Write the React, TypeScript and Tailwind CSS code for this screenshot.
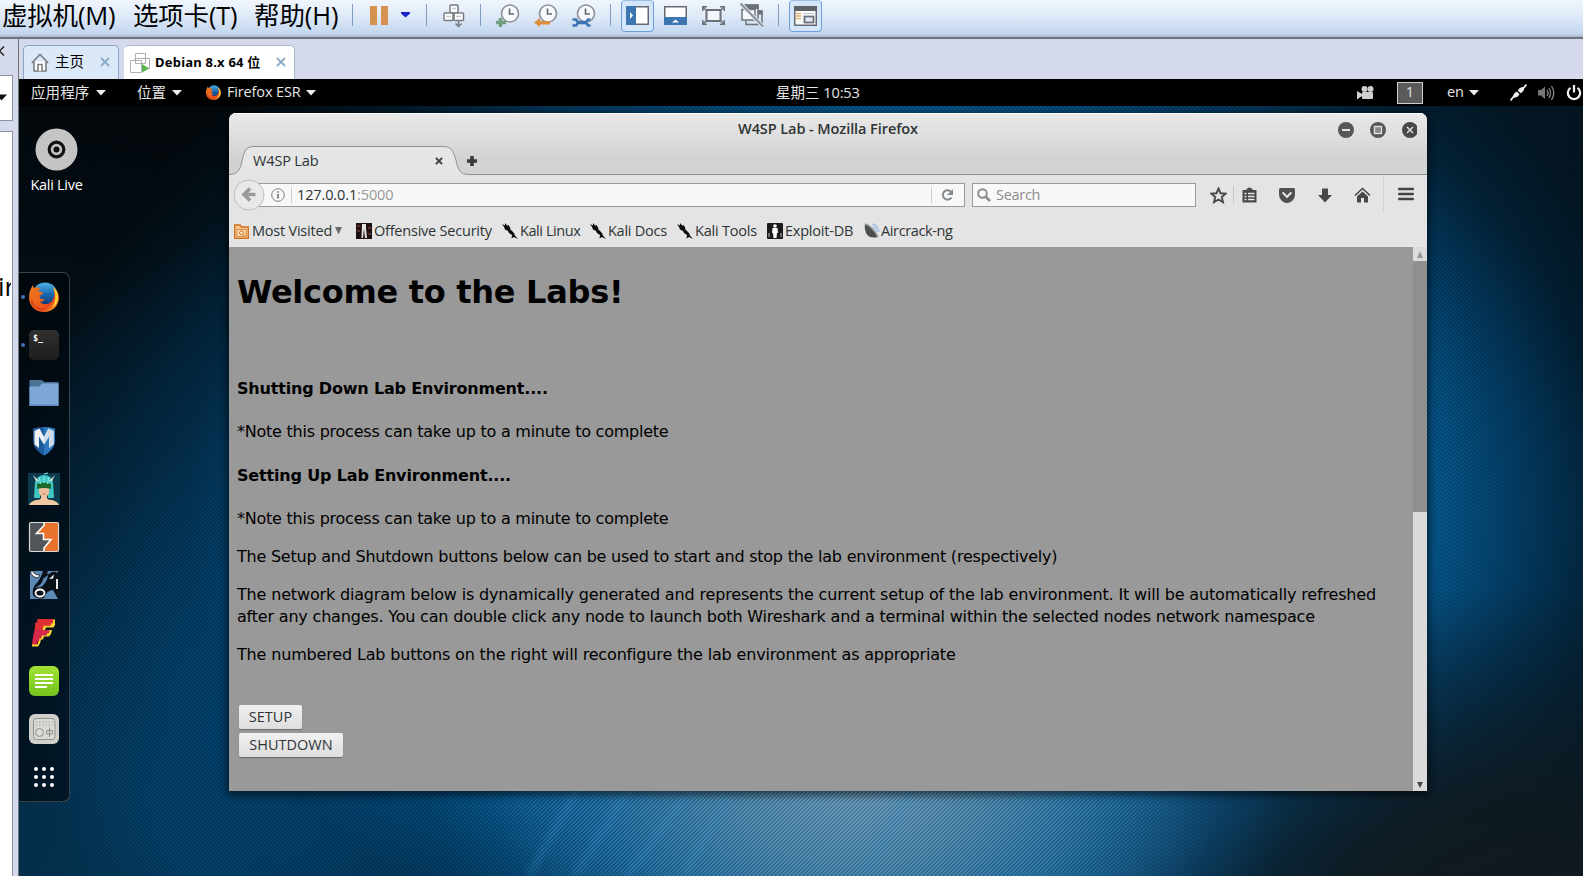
import React from "react";

const ui = "font-['Open_Sans','Noto_Sans_CJK_SC',sans-serif]";

function Sep({ className = "" }: { className?: string }) {
  return <div className={"w-px h-[22px] mt-1 bg-[#7f9cc0] shrink-0 " + className} />;
}

function Caret({ className = "" }: { className?: string }) {
  return (
    <svg className={"w-[10px] h-[6px] shrink-0 " + className} viewBox="0 0 10 6">
      <path d="M0 0H10L5 5.5Z" fill="#eeeeee" />
    </svg>
  );
}

function FirefoxLogo({ className = "", id }: { className?: string; id: string }) {
  return (
    <svg className={"shrink-0 " + className} viewBox="0 0 30 30">
      <defs>
        <linearGradient id={id + "f"} x1="0" y1="0" x2="0.9" y2="1">
          <stop offset="0" stopColor="#e8791c" />
          <stop offset="0.5" stopColor="#f0641a" />
          <stop offset="0.75" stopColor="#ea4a17" />
          <stop offset="1" stopColor="#fbc52c" />
        </linearGradient>
        <linearGradient id={id + "g"} x1="0" y1="0" x2="0" y2="1">
          <stop offset="0" stopColor="#4fb3e8" />
          <stop offset="0.5" stopColor="#1565ad" />
          <stop offset="1" stopColor="#0a2c66" />
        </linearGradient>
      </defs>
      <circle cx="16" cy="13" r="12.6" fill={"url(#" + id + "g)"} />
      <path d="M24 5C28 8 30 11.500 30 16C29.500 24.500 23 30 15 30C6.500 30 0 24 0 15.500C0 11 1 8 2.500 5.500L3.500 3L5 6C7 5 9.500 5 11.500 6.500C10 7 9.500 8.500 9.800 9.500L14 10.500C14 12 12.500 12.800 11 13.500C10.500 14.500 11 16 12 17L16 17.500C14.500 19.500 12 20 10.500 19.500C13 22.500 18 23 21.500 20.500C25.500 17.500 26.500 11 24 5Z" fill={"url(#" + id + "f)"} />
      <path d="M24 5C28 8 29.500 12 29.200 17C28.500 21 26.500 24 23 25.500C27 20 27.500 11 24 5Z" fill="#fdd235" />
      <path d="M3 17C5 25 12 28 20 26C12 30 3 27 1.500 19Z" fill="#c8361a" fillOpacity="0.600" />
    </svg>
  );
}

function Clock({ className = "", children }: { className?: string; children: React.ReactNode }) {
  return (
    <svg className={"w-6 h-6 mt-1 shrink-0 " + className} viewBox="0 0 24 24" fill="none">
      <circle cx="14" cy="9.500" r="8.500" fill="#f6f9fd" stroke="#8b9096" strokeWidth="1.600" />
      <path d="M13.500 4.500V10H18" stroke="#63686d" strokeWidth="1.600" />
      {children}
    </svg>
  );
}

function VmToolbar() {
  return (
    <div className={"flex h-[39px] shrink-0 border-b-2 border-[#6e747c] bg-[linear-gradient(#f1f6fd_0%,#dde9f8_45%,#c2d6ee_92%,#a9b4c2_100%)] " + ui}>
      <div className="flex w-[352px] shrink-0 pl-[2px] text-[25.500px] leading-[31px] text-black whitespace-nowrap">
        <span className="w-[131px] tracking-[-0.200px]">虚拟机(M)</span>
        <span className="w-[121px] tracking-[-0.200px]">选项卡(T)</span>
        <span className="tracking-[-0.100px]">帮助(H)</span>
      </div>
      <Sep />
      <div className="flex gap-[4px] ml-[17px] mt-[6px]">
        <div className="w-[7px] h-[19px] bg-[#d4914f]" />
        <div className="w-[7px] h-[19px] bg-[#d4914f]" />
      </div>
      <svg className="w-[9px] h-[6px] mt-[12px] ml-[13px]" viewBox="0 0 9 6"><path d="M0 0H9V1.500L4.500 5.500L0 1.500Z" fill="#1a23c4" /></svg>
      <Sep className="ml-[16px]" />
      <svg className="w-[22px] h-[24px] mt-[4px] ml-[16px]" viewBox="0 0 22 24" fill="#fff" stroke="#777b80" strokeWidth="1.500">
        <rect x="7" y="1" width="8" height="8" rx="1" />
        <rect x="1" y="9" width="9" height="7.500" rx="1" />
        <rect x="11" y="9" width="9.500" height="7.500" rx="1" />
        <path d="M15.500 16V22M12.500 19.500L15.500 22.500L18.500 19.500" fill="none" />
        <path d="M3 12.500H8M13 12.500H18M9 4.500H13" stroke="#c3c8ce" />
      </svg>
      <Sep className="ml-[15px]" />
      <Clock className="ml-[15px]">
        <path d="M4.500 14V23M0 18.500H10" stroke="#6f9d80" strokeWidth="3.400" />
      </Clock>
      <Clock className="ml-[14px]">
        <path d="M0 18.500L6 14V17H16V20.500H6V23Z" fill="#dc8f3c" />
      </Clock>
      <Clock className="ml-[14px]">
        <path d="M5 18.500H14" stroke="#3b74b4" strokeWidth="3.500" />
        <path d="M0.500 15.500H4L6 18.500L4 21.500H0.500M18.500 15.500H16L14 18.500L16 21.500H18.500" stroke="#3b74b4" strokeWidth="2.600" />
      </Clock>
      <Sep className="ml-[14px]" />
      <div className="ml-[10px] w-[33px] h-[32px] shrink-0 rounded-[4px] border border-[#6e9fdc] border-t-[#9fbfe8] bg-[#d5e6fa] flex justify-center">
        <svg className="w-[23px] h-[19px] mt-[5px]" viewBox="0 0 23 19">
          <rect x="0.750" y="0.750" width="21.500" height="17.500" fill="#fff" stroke="#676b70" strokeWidth="1.500" />
          <rect x="0" y="0" width="10" height="19" fill="#3c76b0" />
          <path d="M4 6L7 9.500L4 13Z" fill="#fff" />
        </svg>
      </div>
      <svg className="w-[23px] h-[19px] mt-[6px] ml-[10px]" viewBox="0 0 23 19">
        <rect x="0.750" y="0.750" width="21.500" height="17" fill="#fff" stroke="#676b70" strokeWidth="1.500" />
        <rect x="0" y="11" width="23" height="8" fill="#3c76b0" />
        <path d="M8 16.500L11.500 13.500L15 16.500Z" fill="#fff" />
      </svg>
      <svg className="w-[23px] h-[19px] mt-[6px] ml-[15px]" viewBox="0 0 23 19" fill="none" stroke="#6c7177" strokeWidth="1.500">
        <rect x="4.500" y="4" width="14" height="11" strokeWidth="2" fill="#f3f7fc" />
        <path d="M0.800 5V0.800H5M18 0.800H22.200V5M22.200 14V18.200H18M5 18.200H0.800V14M1 1L4 4M22 1L19 4M1 18L4 15M22 18L19 15" />
      </svg>
      <svg className="w-[24px] h-[24px] mt-[3px] ml-[15px]" viewBox="0 0 24 24" fill="none">
        <rect x="5" y="2" width="13" height="13" fill="#e9f0f9" stroke="#6c7177" strokeWidth="1.500" />
        <rect x="4.300" y="1.500" width="14.500" height="4.500" fill="#6c7177" />
        <path d="M18 8H22V20H17" stroke="#6c7177" strokeWidth="1.500" />
        <rect x="18" y="7.500" width="4.500" height="4" fill="#6c7177" />
        <rect x="2" y="6.500" width="13" height="10.500" fill="#f7fafd" stroke="#6c7177" strokeWidth="1.500" />
        <path d="M6 18V21.500H18V16" stroke="#6c7177" strokeWidth="1.500" />
        <path d="M0.500 0.500L23 23.500" stroke="#dfe9f6" strokeWidth="4" />
        <path d="M0.500 0.500L23 23.500" stroke="#8c9096" strokeWidth="2" />
      </svg>
      <Sep className="ml-[14px]" />
      <div className="ml-[10px] w-[33px] h-[32px] shrink-0 rounded-[4px] border border-[#6e9fdc] border-t-[#9fbfe8] bg-[#d5e6fa] flex justify-center">
        <svg className="w-[23px] h-[20px] mt-[5px]" viewBox="0 0 23 20">
          <rect x="0.750" y="0.750" width="21.500" height="18.500" fill="#fafbfc" stroke="#676b70" strokeWidth="1.500" />
          <rect x="0" y="0" width="23" height="5" fill="#5f6266" />
          <path d="M2 7.500H7M2 10H7M2 12.500H7" stroke="#e5b476" strokeWidth="1.300" />
          <path d="M9 7.500H20" stroke="#c5c9cf" />
          <rect x="10.500" y="10.500" width="9" height="6" fill="#dfeaf6" stroke="#6c7177" strokeWidth="1.800" />
        </svg>
      </div>
    </div>
  );
}

function TabClose({ className = "" }: { className?: string }) {
  return (
    <svg className={"w-[10px] h-[10px] shrink-0 " + className} viewBox="0 0 10 10" stroke="#88aac6" strokeWidth="1.800">
      <path d="M1 1L9 9M9 1L1 9" />
    </svg>
  );
}

function VmTabs() {
  return (
    <div className={"flex h-10 shrink-0 items-end bg-[#d4d9ec] pl-[4px] " + ui}>
      <div className="flex h-[34px] w-[96px] items-center rounded-t-[5px] border border-b-0 border-[#8da5c4] bg-[#dbe8f7] pl-[7px]">
        <svg className="w-[18px] h-[19px] mt-[-1px]" viewBox="0 0 18 19" fill="#fff" stroke="#7b7f84" strokeWidth="1.600">
          <path d="M3 8.500V18H15V8.500" />
          <path d="M7 18V11.500H11V18" />
          <path d="M0.800 10L9 1.500L17.200 10" fill="none" />
        </svg>
        <span className="ml-[6px] mt-[-2px] w-[45px] text-[14.500px] leading-5 text-black">主页</span>
        <TabClose className="mt-[-2px]" />
      </div>
      <div className="ml-[5px] flex h-[34px] w-[171px] items-center rounded-t-[5px] border border-b-0 border-[#a9b6cc] border-l-white bg-white pl-[5px]">
        <svg className="w-[20px] h-[20px]" viewBox="0 0 20 20" fill="none" stroke="#9a9ea4" strokeWidth="1">
          <path d="M5.500 0.500H15.500V10.500H5.500ZM0.500 7.500H11.500V19.500H0.500ZM4.500 5.500H19.500V16" strokeOpacity="0.800" />
          <path d="M12 11L19.500 15.500L12 19.500Z" fill="#5cb54e" stroke="none" />
        </svg>
        <span className="ml-[5px] mt-[-2px] w-[121px] whitespace-nowrap text-[13px] font-bold leading-5 tracking-[0.220px] text-black font-['Noto_Sans','Noto_Sans_CJK_SC',sans-serif]">Debian 8.x 64 位</span>
        <TabClose className="mt-[-2px]" />
      </div>
    </div>
  );
}

function GnomeBar() {
  return (
    <div className={"flex h-[27px] shrink-0 items-center bg-black text-[14.500px] leading-none text-[#e6e6e6] whitespace-nowrap " + ui}>
      <span className="ml-[12px] w-[65px] pt-[1px] tracking-[0.100px]">应用程序</span>
      <Caret />
      <span className="ml-[31px] w-[35px] pt-[1px]">位置</span>
      <Caret />
      <FirefoxLogo id="bar" className="ml-[24px] w-[15px] h-[15px]" />
      <span className="ml-[6px] w-[79px] tracking-[-0.150px]">Firefox ESR</span>
      <Caret />
      <span className="ml-[460px] w-[581px] pt-[1px]"><span>星期三</span> <span className="tracking-[-0.100px]">10:53</span></span>
      <svg className="w-[17px] h-[14px] shrink-0" viewBox="0 0 17 14" fill="#d0d0d0">
        <circle cx="7.500" cy="3" r="3" /><circle cx="13.500" cy="3" r="3" />
        <rect x="5" y="6" width="11" height="7" rx="1" />
        <path d="M0 5L5 8V10L0 13.500Z" />
      </svg>
      <div className="ml-[23px] w-[26px] h-[22px] shrink-0 border border-[#cfcfcf] bg-[#5a5a5a] flex items-center justify-center">1</div>
      <span className="ml-[24px] w-[22px] tracking-[-0.200px]">en</span>
      <Caret />
      <svg className="ml-[31px] w-[17px] h-[17px] shrink-0" viewBox="0 0 17 17">
        <path d="M0.500 16.500L4 12M13 4.500L16.500 0.500" stroke="#eee" strokeWidth="1.800" />
        <path d="M3 13.500C2.600 11 4.500 8.800 7 7.600L9.500 10.300C8.500 12.500 6 14.300 3 13.500ZM7.800 6.500C9 4 11.500 2.600 14.200 3.200C14.400 6 13 8.200 10.500 9.300Z" fill="#eee" />
      </svg>
      <svg className="ml-[11px] w-[18px] h-[16px] shrink-0" viewBox="0 0 18 16" fill="none" stroke="#8c8c8c" strokeWidth="1.300">
        <path d="M0 5H3L7 1.500V14L3 10.500H0Z" fill="#777" stroke="none" />
        <path d="M9 5Q11 8 9 11M11 3Q14 8 11 13M13.500 1Q18 8 13.500 15" />
      </svg>
      <svg className="ml-[10px] w-[16px] h-[16px] shrink-0" viewBox="0 0 16 16" fill="none" stroke="#f0f0f0" strokeWidth="2.200">
        <path d="M4.500 2.800A6.200 6.200 0 1 0 11.500 2.800M8 0V7.500" />
      </svg>
    </div>
  );
}

function DockItem({ children, running }: { children: React.ReactNode; running?: boolean }) {
  return (
    <div className="flex h-12 items-center">
      <div className={"ml-[2px] mr-[4px] size-[4px] rounded-full " + (running ? "bg-[#3f73b4]" : "bg-transparent")} />
      <svg className="size-[30px] overflow-visible" viewBox="0 0 30 30">{children}</svg>
    </div>
  );
}

function Dock() {
  return (
    <div className="absolute left-0 top-[166px] h-[530px] w-[51px] rounded-r-[7px] border border-l-0 border-[#36424a] bg-[#00050a]/60">
      <div className="flex h-12 items-center">
        <div className="ml-[2px] mr-[4px] size-[4px] rounded-full bg-[#3f73b4]" />
        <FirefoxLogo id="dock" className="size-[30px]" />
      </div>
      <DockItem running>
        <defs><linearGradient id="term" x1="0" y1="0" x2="0" y2="1"><stop offset="0" stopColor="#303030" /><stop offset="1" stopColor="#1d1d1d" /></linearGradient></defs>
        <rect width="30" height="30" rx="5" fill="url(#term)" />
        <text x="4" y="11" fontSize="8.500" fontWeight="bold" fill="#fff" fontFamily="DejaVu Sans Mono">$_</text>
      </DockItem>
      <DockItem>
        <path d="M0.500 2H13L15 4H29.500V27H0.500Z" fill="#4b7396" />
        <path d="M0.500 8.500H10L13 5.500H29.500V28H0.500Z" fill="#7ea7d8" />
        <rect x="0.500" y="26.500" width="29" height="1.500" fill="#5e8cc4" />
      </DockItem>
      <DockItem>
        <path d="M4 2.500Q15 -0.500 26 2.500V15.500Q25 24 15 29.500Q5 24 4 15.500Z" fill="#1f5c9e" />
        <path d="M15 1Q21 1 26 2.500V15.500Q25 24 15 29.500Z" fill="#2e79bd" />
        <path d="M5.500 5L10.500 2.500L15 11L19.500 2.500L24.500 5V18.500L20 22V10.500L15 18.500L10 10.500V22L5.500 18.500Z" fill="#eef2f7" />
        <path d="M15 11L19.500 2.500L24.500 5V18.500L20 22V10.500L15 18.500Z" fill="#cfdbe8" />
      </DockItem>
      <DockItem>
        <rect x="-1" y="-1" width="32" height="32" fill="#0c3a4d" />
        <path d="M5 24L6 8Q9 1 15 1Q22 1 24 8L25 24H19V11H11V24Z" fill="#3fc6c5" />
        <path d="M4 1L7 7L10 7ZM26 1L23 7L20 7Z" fill="#e8e4cf" />
        <path d="M10 11H20V19L17 24H13L10 19Z" fill="#eebf9c" />
        <path d="M8 10Q15 7 22 10V15Q15 13 8 15Z" fill="#1c6b2c" />
        <path d="M0 31Q2 26 11 25.500L13 22H17L19 25.500Q28 26 30 31Z" fill="#f0c8a4" />
        <path d="M13.500 20H16.500" stroke="#b0705a" />
        <path d="M10 3L11.500 10M15 0L19 -1M15 3V9M20 3L18.500 10" stroke="#8be9e4" />
      </DockItem>
      <DockItem>
        <rect x="0.500" y="0.500" width="29" height="29" rx="1" fill="#50565a" />
        <path d="M15 0.500H29.500V29.500H15L15 26L22 17.500H14V12H7L15 3Z" fill="#e9722c" />
        <path d="M15 1V3.500L7.500 11.500H14.500V17.500H22L15 26V29" fill="none" stroke="#fff" strokeWidth="1.600" />
        <rect x="0.500" y="0.500" width="29" height="29" rx="1.500" fill="none" stroke="#d9d9d6" strokeWidth="1.200" />
      </DockItem>
      <DockItem>
        <rect x="1" y="1" width="28" height="28" fill="#5d8ab5" />
        <path d="M14 1Q12 9 6 15Q3 19 4 25Q8 30 15 28Q18 20 24 20L29 29V3Q24 0 20 4Q17 5 19 1Z" fill="#0a1119" />
        <path d="M1.500 1Q2 7 9 8L11 5Q5 5 4 1Z" fill="#fff" stroke="#111" strokeWidth="0.800" />
        <path d="M14 9Q13 15 6 18L12 17Q18 13 19 5Z" fill="#5d8ab5" />
        <ellipse cx="11" cy="23" rx="4.500" ry="3.500" fill="#0a1119" stroke="#fff" strokeWidth="1.800" />
        <path d="M20 9L25 4.500L24 8.500Z" fill="#fff" />
        <path d="M28 9V19" stroke="#fff" strokeWidth="1.800" />
      </DockItem>
      <DockItem>
        <path d="M10 1.500H26V7L24.500 9.500H17L16 12H23L22 16L20 18.500H15L14 21.500H12L11 25.500L9 28.500H3V26H9Z" fill="#f6d32e" />
        <path d="M8.500 1H24V5L22 5.500L21.500 7.500H14.500L13.500 12H20.500L20 15L18 15.500L17.500 17.500H13L12 20.500H10.500L10 23.500H8.500L8 26.500H3L4 19L5.500 12L6.500 4.500H8.500Z" fill="#d5294a" />
        <path d="M8.500 1H24V5L22 5.500L21.500 7.500H14.500L13.500 12H6L6.500 4.500H8.500Z" fill="#e02f34" />
      </DockItem>
      <DockItem>
        <defs><linearGradient id="leaf" x1="0" y1="0" x2="0" y2="1"><stop offset="0" stopColor="#a2e234" /><stop offset="1" stopColor="#74c31d" /></linearGradient></defs>
        <rect width="30" height="30" rx="6" fill="url(#leaf)" />
        <path d="M6 9H24M6 13H24M6 17H24M6 21H18" stroke="#fff" strokeWidth="2" />
      </DockItem>
      <DockItem>
        <rect width="30" height="30" rx="6" fill="#cfd0cc" />
        <rect x="4.500" y="4.500" width="21.500" height="21" rx="3" fill="#d9dad6" stroke="#8e8f8b" />
        <path d="M7 8H24M7 11H24" stroke="#9a9b97" strokeDasharray="1.200 2" />
        <circle cx="10.500" cy="18.500" r="4" fill="none" stroke="#8e8f8b" />
        <path d="M20.500 13.500V23M17.500 16.500H23.500V20H17.500Z" fill="none" stroke="#8e8f8b" />
      </DockItem>
      <DockItem>
        <g fill="#fff">
          <circle cx="7" cy="7" r="2" /><circle cx="15" cy="7" r="2" /><circle cx="23" cy="7" r="2" />
          <circle cx="7" cy="15" r="2" /><circle cx="15" cy="15" r="2" /><circle cx="23" cy="15" r="2" />
          <circle cx="7" cy="23" r="2" /><circle cx="15" cy="23" r="2" /><circle cx="23" cy="23" r="2" />
        </g>
      </DockItem>
    </div>
  );
}

function KaliIcon({ className = "" }: { className?: string }) {
  return (
    <svg className={"size-4 shrink-0 " + className} viewBox="0 0 16 16" fill="#0d0d0d">
      <path d="M0 1L3 2.500L3 0L5.500 3L6 1.500L8.500 5L8 6L10 8L12 10L13 12.500L16 16L12 14L9.500 15.500L10 12L7 10L6 8L3 6.500L2 4Z" />
    </svg>
  );
}

function Firefox() {
  return (
    <div className={"absolute left-[210px] top-[7px] flex h-[678px] w-[1198px] flex-col overflow-hidden rounded-t-[7px] bg-[#e4e4e4] text-[#2e3436] shadow-[0_2px_8px_2px_rgba(0,0,0,0.6)] " + ui}>
      <div className="h-[62px] shrink-0 bg-[linear-gradient(#e9e9e9_0%,#d2d2d2_75%,#d3d3d3_100%)]">
        <div className="flex h-[33px] items-center border-t border-white">
          <span className="ml-[509px] mt-[-2px] w-[579px] whitespace-nowrap text-[14.500px] font-semibold leading-none tracking-[-0.080px]">W4SP Lab - Mozilla Firefox</span>
          <svg className="w-[80px] h-4 mt-[-1px] ml-[20px]" viewBox="0 0 80 16" fill="none" stroke="#e4e4e4">
            <circle cx="9" cy="8" r="8" fill="#575757" stroke="none" />
            <path d="M5 8H13" strokeWidth="2" />
            <circle cx="41" cy="8" r="8" fill="#575757" stroke="none" />
            <rect x="37.500" y="4.500" width="7" height="7" strokeWidth="1.300" fill="#8a8a8a" />
            <circle cx="73" cy="8" r="8" fill="#484848" stroke="none" />
            <path d="M70 5L76 11M76 5L70 11" strokeWidth="1.400" />
          </svg>
        </div>
        <div className="grid h-[29px] grid-cols-[248px_1fr]">
          <div className="col-start-1 row-start-1">
            <svg className="block w-[248px] h-[29px]" viewBox="0 0 248 29">
              <path d="M0 28.500C9 28.500 11 24 13 15C15 5 17 0.500 25 0.500H214C222 0.500 224 4 227 14C229 24 231 28.500 240 28.500H248V29H0Z" fill="#e6e6e6" />
              <path d="M0 28.500C9 28.500 11 24 13 15C15 5 17 0.500 25 0.500H214C222 0.500 224 4 227 14C229 24 231 28.500 240 28.500H248" fill="none" stroke="#8f8f8f" />
            </svg>
          </div>
          <div className="z-10 col-start-1 row-start-1 flex items-center pl-[24px]">
            <span className="w-[182px] whitespace-nowrap pt-[1px] text-[14.500px] leading-none tracking-[-0.150px]">W4SP Lab</span>
            <svg className="size-[8px]" viewBox="0 0 9 9" stroke="#3d3d3d" strokeWidth="2.200"><path d="M1 1L8 8M8 1L1 8" /></svg>
            <svg className="ml-[24px] size-[10px]" viewBox="0 0 10 10" stroke="#3a3a3a" strokeWidth="3.600"><path d="M5 0V10M0 5H10" /></svg>
          </div>
          <div className="border-b border-[#8f8f8f]" />
        </div>
      </div>
      <div className="flex h-[40px] shrink-0 items-center">
        <svg className="z-10 ml-[4px] size-[32px] shrink-0" viewBox="0 0 32 32">
          <circle cx="16" cy="16" r="15" fill="#e9e9e9" stroke="#bdbdbd" />
          <path d="M22.500 15.500H12M17 9.500L11 15.500L17 21.500" fill="none" stroke="#9a9a9a" strokeWidth="3.600" />
        </svg>
        <div className="ml-[-6px] flex h-6 w-[706px] items-center border border-[#9b9b9b] bg-[#f8f8f8] pl-[11px]">
          <svg className="size-[14px] shrink-0" viewBox="0 0 14 14" fill="none" stroke="#7f7f7f"><circle cx="7" cy="7" r="6.300" /><path d="M7 6V10.500M7 3.200V4.800" strokeWidth="1.800" /></svg>
          <div className="ml-[6px] h-4 w-px bg-[#cfcfcf]" />
          <span className="ml-[5px] w-[634px] whitespace-nowrap text-[14.500px] leading-none tracking-[-0.120px]">127.0.0.1<span className="text-[#979797]">:5000</span></span>
          <div className="h-4 w-px bg-[#cfcfcf]" />
          <svg className="ml-[9px] size-[12px] shrink-0" viewBox="0 0 12 12" fill="none"><path d="M10.500 8.500A4.700 4.700 0 1 1 9.800 2.500" stroke="#84898e" strokeWidth="2" /><path d="M12 0V6H6Z" fill="#84898e" /></svg>
        </div>
        <div className="ml-[7px] flex h-6 w-[224px] items-center border border-[#9b9b9b] bg-[#f8f8f8] pl-[4px]">
          <svg className="size-[14px] shrink-0" viewBox="0 0 14 14" fill="none" stroke="#8d8d8d" strokeWidth="2"><circle cx="5.500" cy="5.500" r="4.300" /><path d="M8.500 8.500L13 13" strokeWidth="2.600" /></svg>
          <span className="ml-[5px] text-[14.500px] leading-none tracking-[-0.300px] text-[#8c8c8c]">Search</span>
        </div>
        <svg className="ml-[14px] size-[17px] shrink-0" viewBox="0 0 17 17" fill="none" stroke="#474747" strokeWidth="1.900"><path d="M8.500 1.500L10.600 6.300L15.600 6.700L11.800 10.100L13 15.200L8.500 12.500L4 15.200L5.200 10.100L1.400 6.700L6.400 6.300Z" /></svg>
        <div className="ml-[6px] h-[18px] w-px bg-[#c6c6c6]" />
        <svg className="ml-[8px] w-[15px] h-[16px] shrink-0" viewBox="0 0 15 16"><path d="M0.500 3H4.500V1.500H6L7.500 0L9 1.500H10.500V3H14.500V15.500H0.500Z" fill="#484848" /><path d="M2.500 6.500H4.500M2.500 9.500H4.500M2.500 12.500H4.500M6 6.500H12.500M6 9.500H12.500M6 12.500H12.500" stroke="#e4e4e4" strokeWidth="1.500" /></svg>
        <svg className="ml-[22px] w-[16px] h-[15px] shrink-0" viewBox="0 0 16 15"><path d="M1.500 0H14.500Q16 0 16 1.500V6.500Q16 10 13.500 12.500Q11 15 8 15Q5 15 2.500 12.500Q0 10 0 6.500V1.500Q0 0 1.500 0Z" fill="#515151" /><path d="M4.200 5L8 8.800L11.800 5" fill="none" stroke="#eee" strokeWidth="1.900" strokeLinecap="round" /></svg>
        <svg className="ml-[22px] w-[16px] h-[15px] shrink-0" viewBox="0 0 16 15"><path d="M5 0.500H11V7H15L8 14.500L1 7H5Z" fill="#484848" /></svg>
        <svg className="ml-[21px] w-[17px] h-[16px] shrink-0" viewBox="0 0 17 16"><path d="M1 8.500L8.500 1.500L16 8.500" fill="none" stroke="#484848" strokeWidth="1.600" /><path d="M8.500 4.500L14 9.500V15.500H10V11H7V15.500H3V9.500Z" fill="#484848" /></svg>
        <div className="ml-[12px] h-[36px] w-px bg-[#d2d2d2]" />
        <svg className="ml-[14px] mt-[-2px] w-[16px] h-[14px] shrink-0" viewBox="0 0 16 14" stroke="#444" strokeWidth="2.500" strokeLinecap="round"><path d="M1.200 2H14.800M1.200 7H14.800M1.200 12H14.800" /></svg>
      </div>
      <div className="flex h-[32px] shrink-0 items-center pl-[5px] text-[14.500px] leading-none whitespace-nowrap">
        <svg className="size-[15px] shrink-0" viewBox="0 0 15 15"><path d="M0.700 1H6L7.500 3H14.300V14.300H0.700Z" fill="#f6c58e" stroke="#cf6f1c" strokeWidth="1.300" /><rect x="3" y="5.500" width="9" height="7" fill="#fbe0c0" stroke="#dc8a3c" /><circle cx="7.500" cy="8.800" r="2" fill="none" stroke="#cf6f1c" /><path d="M9 10.500L11 12.500" stroke="#cf6f1c" /></svg>
        <span className="ml-[3px] w-[83px] tracking-[-0.220px]">Most Visited</span>
        <svg className="w-[7px] h-[8px] shrink-0" viewBox="0 0 7 8"><path d="M0 0H7L3.500 7.500Z" fill="#6b6b6b" /></svg>
        <svg className="ml-[14px] size-[16px] shrink-0" viewBox="0 0 16 16"><rect width="16" height="16" fill="#211012" /><path d="M1 3H4M1 8H4M12 5H15M12 11H15" stroke="#6d3b3b" strokeWidth="1.500" /><path d="M6 1H10V5L11 15H9L8 6L7 15H5.500Z" fill="#e6e2dd" /></svg>
        <span className="ml-[2px] w-[128px] tracking-[-0.220px]">Offensive Security</span>
        <KaliIcon /><span className="ml-[2px] w-[70px] tracking-[-0.420px]">Kali Linux</span>
        <KaliIcon /><span className="ml-[2px] w-[69px] tracking-[-0.260px]">Kali Docs</span>
        <KaliIcon /><span className="ml-[2px] w-[72px] tracking-[-0.220px]">Kali Tools</span>
        <svg className="size-[16px] shrink-0" viewBox="0 0 16 16"><rect width="16" height="16" rx="1" fill="#1b1b1b" /><circle cx="8" cy="3" r="1.800" fill="#fff" /><path d="M5.500 5H10.500L11 10H10L9.500 15H6.500L6 10H5Z" fill="#fff" /><path d="M2 10V14M14 10V14" stroke="#888" strokeWidth="1.500" /></svg>
        <span className="ml-[2px] w-[79px] tracking-[-0.220px]">Exploit-DB</span>
        <svg className="size-[16px] shrink-0" viewBox="0 0 16 16"><path d="M1 1Q8 3 14 14Q5 16 2 10Q0 5 1 1Z" fill="#4b4f4c" /><path d="M1 1Q8 3 14 14" stroke="#8e9692" fill="none" strokeWidth="1.500" /><path d="M8 1Q14 2 15 9M9 4Q12 5 12.500 9" stroke="#9fc0e6" fill="none" strokeWidth="1.400" /></svg>
        <span className="ml-[1px] tracking-[-0.370px]">Aircrack-ng</span>
      </div>
      <div className="flex min-h-0 flex-1">
        <main className="flex-1 whitespace-nowrap bg-[#999999] px-2 pt-[23px] text-[16px] leading-[22px] text-black font-['DejaVu_Sans',sans-serif]">
          <h1 className="h-[44px] text-[32px] font-bold leading-[44px] tracking-[-0.280px]">Welcome to the Labs!</h1>
          <h4 className="mt-[64px] font-bold tracking-[-0.185px]">Shutting Down Lab Environment....</h4>
          <p className="mt-[21px] tracking-[-0.235px]">*Note this process can take up to a minute to complete</p>
          <h4 className="mt-[22px] font-bold tracking-[-0.165px]">Setting Up Lab Environment....</h4>
          <p className="mt-[21px] tracking-[-0.235px]">*Note this process can take up to a minute to complete</p>
          <p className="mt-4 tracking-[-0.230px]">The Setup and Shutdown buttons below can be used to start and stop the lab environment (respectively)</p>
          <p className="mt-4 tracking-[-0.163px]">
            The network diagram below is dynamically generated and represents the current setup of the lab environment. It will be automatically refreshed<br />
            <span className="tracking-[-0.190px]">after any changes. You can double click any node to launch both Wireshark and a terminal within the selected nodes network namespace</span>
          </p>
          <p className="mt-4 tracking-[-0.165px]">The numbered Lab buttons on the right will reconfigure the lab environment as appropriate</p>
          <div className={"ml-[2px] mt-[39px] flex flex-col items-start gap-1 text-[14.500px] text-[#2e3436] " + ui}>
            <button className="h-6 w-[63px] rounded-[2px] bg-[linear-gradient(#f1f1f1,#dedede)] leading-none shadow-[0_1px_1px_rgba(0,0,0,0.3)]">SETUP</button>
            <button className="h-6 w-[104px] rounded-[2px] bg-[linear-gradient(#f1f1f1,#dedede)] leading-none shadow-[0_1px_1px_rgba(0,0,0,0.3)]">SHUTDOWN</button>
          </div>
        </main>
        <div className="flex w-[14px] flex-col bg-[#dadada]">
          <div className="flex h-[13px] mt-px items-center justify-center bg-[#dcdcdc]"><svg className="w-[6px] h-[7px]" viewBox="0 0 6 7"><path d="M0 7H6L3 0Z" fill="#999" /></svg></div>
          <div className="h-[251px] bg-[#8f8f8f]" />
          <div className="flex-1" />
          <div className="flex h-[13px] items-center justify-center"><svg className="w-[6px] h-[6px]" viewBox="0 0 6 6"><path d="M0 0H6L3 6Z" fill="#444" /></svg></div>
        </div>
      </div>
    </div>
  );
}

function Desktop() {
  return (
    <div className="relative min-h-0 flex-1 overflow-hidden bg-[#01070d] bg-[radial-gradient(ellipse_430px_260px_at_840px_680px,#6b9fc0_0%,rgba(85,145,182,0.9)_30%,rgba(50,128,180,0.55)_62%,rgba(20,100,160,0.2)_85%,transparent_100%),radial-gradient(ellipse_480px_330px_at_1490px_810px,#12191b_0%,rgba(14,25,31,0.9)_35%,rgba(8,28,42,0.4)_75%,transparent_100%),radial-gradient(ellipse_870px_640px_at_880px_400px,#0a6bb0_0%,#07609f_50%,#045890_62%,rgba(0,70,118,0.82)_72%,rgba(0,52,88,0.5)_82%,rgba(0,38,62,0.22)_92%,transparent_100%),radial-gradient(ellipse_400px_480px_at_270px_600px,#00528c_0%,rgba(0,76,128,0.85)_30%,rgba(0,60,100,0.45)_62%,transparent_100%),linear-gradient(190deg,#01131f_0%,#000509_25%,#01101b_60%,#022c46_100%)]">
      <svg className="absolute left-[500px] top-[680px] w-[500px] h-[90px] blur-[3px]" viewBox="0 0 500 90" stroke="#3b96d4" strokeOpacity="0.3" strokeWidth="7">
        <path d="M112 0L56 90M175 0L108 90M215 0L165 90M60 0L10 90M395 0L345 90" />
      </svg>
      <div className="absolute inset-0 bg-[repeating-linear-gradient(135deg,rgba(0,0,0,0.2)_0px,rgba(0,0,0,0.2)_1px,rgba(120,180,220,0.04)_1.500px,rgba(120,180,220,0.04)_2.500px,rgba(0,0,0,0.200)_2.830px)]" />
      <div className={"absolute left-[7px] top-[22px] flex w-[61px] flex-col items-center text-[14.500px] leading-none text-white " + ui}>
        <svg className="size-[43px]" viewBox="0 0 43 43"><circle cx="21.500" cy="21.500" r="21" fill="#c4c4c4" /><circle cx="21.500" cy="21.500" r="7.300" fill="none" stroke="#111" strokeWidth="3.200" /><circle cx="21.500" cy="21.500" r="3" fill="#111" /></svg>
        <span className="mt-[7px] whitespace-nowrap tracking-[-0.300px]">Kali Live</span>
      </div>
      <Dock />
      <Firefox />
    </div>
  );
}

export default function App() {
  return (
    <div className="flex h-[876px] w-[1583px] flex-col overflow-hidden bg-[#d4d9ec]">
      <VmToolbar />
      <div className="flex min-h-0 flex-1">
        <aside className={"flex w-[18px] shrink-0 flex-col pr-[5px] " + ui}>
          <div className="h-[36px] overflow-hidden">
            <svg className="mt-[7px] w-[5px] h-[10px]" viewBox="0 0 5 10"><path d="M-5 0.500L4 9.500M-5 9.500L4 0.500" stroke="#222" strokeWidth="1.400" /></svg>
          </div>
          <div className="h-[46px] border border-l-0 border-[#8b93a5] bg-white overflow-hidden">
            <svg className="mt-[18px] w-[7px] h-[7px]" viewBox="0 0 7 7"><path d="M-4 0.500H7L1.500 6.500Z" fill="#111" /></svg>
          </div>
          <div className="mt-[10px] flex-1 overflow-hidden border border-b-0 border-l-0 border-[#8b93a5] bg-white pt-[136px]">
            <div className="ml-[-2px] w-[13px] overflow-hidden text-[26px] leading-[36px] text-black">ir</div>
          </div>
        </aside>
        <div className="flex min-w-0 flex-1 flex-col border-l border-[#6e747c]">
          <VmTabs />
          <GnomeBar />
          <Desktop />
        </div>
      </div>
    </div>
  );
}
